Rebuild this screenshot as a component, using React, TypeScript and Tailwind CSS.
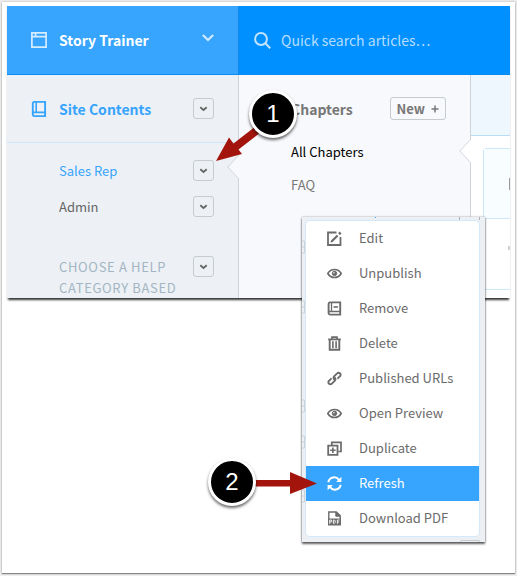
import React from 'react';

const MENU_ITEMS = [
  { label: 'Edit', icon: <EditIcon /> },
  { label: 'Unpublish', icon: <EyeIcon /> },
  { label: 'Remove', icon: <RemoveIcon /> },
  { label: 'Delete', icon: <TrashIcon /> },
  { label: 'Published URLs', icon: <LinkIcon /> },
  { label: 'Open Preview', icon: <EyeIcon /> },
  { label: 'Duplicate', icon: <DuplicateIcon /> },
  { label: 'Refresh', icon: <RefreshIcon />, active: true },
  { label: 'Download PDF', icon: <PdfIcon /> }
];

function EditIcon() {
  return <svg width="15" height="15" viewBox="0 0 15 15" fill="none" stroke="currentColor" aria-hidden="true">
      <path d="M9.5 1.500H1v12.500h12.500V6" strokeWidth="1.800" />
      <path d="M4.800 10.300L10.600 4.400" strokeWidth="2.200" />
      <path d="M12 3.100L13.600 1.500" strokeWidth="2.600" />
      <path d="M3.500 11.600l.6-2.600 2 2z" fill="currentColor" stroke="none" />
    </svg>;
}

function EyeIcon() {
  return <svg width="15" height="15" viewBox="0 0 15 15" fill="none" stroke="currentColor" aria-hidden="true">
      <path d="M.8 7.500C2.400 4.700 4.800 3.500 7.500 3.500S12.600 4.700 14.200 7.500c-1.600 2.800-4 4-6.700 4S2.400 10.300.8 7.500z" strokeWidth="1.600" />
      <circle cx="7.500" cy="7.400" r="2.200" fill="currentColor" strokeWidth="1" />
      <circle cx="6.900" cy="6.700" r=".7" fill="#fff" stroke="none" />
    </svg>;
}

function RemoveIcon() {
  return <svg width="15" height="15" viewBox="0 0 15 15" fill="none" stroke="currentColor" aria-hidden="true">
      <path d="M3 1.400h10.200v12.200H3.200a1.600 1.600 0 0 1-1.600-1.600V2.900A1.500 1.500 0 0 1 3 1.400z" strokeWidth="1.900" />
      <path d="M2 10.500h11" strokeWidth="1.500" />
      <path d="M4.500 2v8.500" strokeWidth="1.300" />
      <path d="M6.500 6h4.400" strokeWidth="1.600" />
    </svg>;
}

function TrashIcon() {
  return <svg width="15" height="15" viewBox="0 0 15 15" fill="none" stroke="currentColor" aria-hidden="true">
      <path d="M1.200 3.400h12.600" strokeWidth="1.800" />
      <path d="M5 3V1.200h5V3" strokeWidth="1.700" />
      <path d="M2.700 4v9.700h9.600V4" strokeWidth="1.900" />
      <path d="M5.900 5.300v6.900M9.100 5.300v6.900" strokeWidth="1.600" />
    </svg>;
}

function LinkIcon() {
  return <svg width="15" height="15" viewBox="0 0 15 15" fill="none" stroke="currentColor" strokeWidth="1.900" strokeLinecap="round" strokeLinejoin="round" aria-hidden="true">
      <path d="M7.200 8.200a2 2 0 0 1-.1-2.900l3-3a2 2 0 0 1 2.900 0 2 2 0 0 1 0 2.900L11 7.200" />
      <path d="M7.800 6.800a2 2 0 0 1 .1 2.900l-3 3a2 2 0 0 1-2.900 0 2 2 0 0 1 0-2.900L4 7.800" />
    </svg>;
}

function DuplicateIcon() {
  return <svg width="15" height="15" viewBox="0 0 15 15" fill="none" stroke="currentColor" aria-hidden="true">
      <path d="M4.800 4V1.300h9.200v9.200H11.300" strokeWidth="1.700" />
      <path d="M1.200 4.700h9.300v9.200H1.200z" strokeWidth="1.800" />
      <path d="M5.900 6.600v5.400M3.200 9.300h5.400" strokeWidth="1.600" />
    </svg>;
}

function RefreshIcon() {
  return <svg width="15" height="15" viewBox="0 0 15 15" fill="none" stroke="currentColor" aria-hidden="true">
      <path d="M1.300 6.300A6 6 0 0 1 12 3.800" strokeWidth="2" />
      <path d="M13.700 8.700A6 6 0 0 1 3 11.200" strokeWidth="2" />
      <path d="M14.400.8v5.300H9.100zM.6 14.200V8.900h5.300z" fill="currentColor" stroke="none" />
    </svg>;
}

function PdfIcon() {
  return <svg width="15" height="15" viewBox="0 0 15 15" fill="none" stroke="currentColor" aria-hidden="true">
      <path d="M1.800 8V1h7.500L13.200 4.500V8" strokeWidth="1.400" />
      <path d="M8.800 1v4.200H13z" fill="currentColor" strokeWidth="1" />
      <path d="M1 7.500h13V14.500H1z" fill="currentColor" stroke="none" />
      <path d="M2.700 12.800V9h1.700v2H2.700M6.400 9h.9l.9.900v1.600l-.9.900h-.9zM10.400 12.800V9h2.100M10.400 11h1.700" stroke="#fff" strokeWidth=".9" />
    </svg>;
}

function WindowIcon() {
  return <svg width="16" height="16" viewBox="0 0 16 16" fill="none" stroke="currentColor" strokeWidth="1.700" aria-hidden="true">
      <path d="M.9.900h14.200v14.200H.9zM.9 4.700h14.200M4.600.900v3.500" />
    </svg>;
}

function BookIcon() {
  return <svg width="16" height="16" viewBox="0 0 16 16" fill="none" stroke="currentColor" strokeWidth="1.900" aria-hidden="true">
      <path d="M3.400.900h10.700v14.200H3.400a1.600 1.600 0 0 1-1.600-1.600V2.500A1.600 1.600 0 0 1 3.400.900z" />
      <path d="M2 11.400h12M5.200 1v10.200" strokeWidth="1.600" />
    </svg>;
}

interface DropButtonProps {
  label: string;
}

const DropButton: React.FC<DropButtonProps> = ({ label }) => {
  return <button type="button" aria-label={label} className="flex h-[21px] w-[21px] shrink-0 items-center justify-center rounded-[3px] border border-[#c6cbcf] text-[#666]">
      <svg width="9" height="9" viewBox="0 0 9 9" fill="none" stroke="currentColor" strokeWidth="1.800" aria-hidden="true">
        <path d="M1.300 3.200l3.200 2.800 3.200-2.800" />
      </svg>
    </button>;
};

interface NotchProps {
  fill: string;
  className: string;
}

const Notch: React.FC<NotchProps> = ({ fill, className }) => {
  return <svg width="12" height="24" viewBox="0 0 12 24" className={`absolute -right-px ${className}`} aria-hidden="true">
      <path d="M12 .5h-.5L.8 12l10.700 11.500h.5z" fill={fill} />
      <path d="M11.500 0v.5L.8 12l10.700 11.500v.5" fill="none" stroke="#d0d6db" />
    </svg>;
};

interface CalloutProps {
  step: number;
  className: string;
}

const Callout: React.FC<CalloutProps> = ({ step, className }) => {
  return <div className={`absolute flex h-12 w-12 items-center justify-center rounded-full border-[3px] border-white bg-black font-['Liberation_Sans',sans-serif] text-2xl text-white shadow-[0_2px_3px_rgba(0,0,0,0.6)] ${className}`}>
      {step}
    </div>;
};

const Sidebar = () => {
  return <aside className="relative w-[232px] shrink-0 border-r border-[#cdd3d8] bg-[#edf1f5]">
      <div className="flex h-[68px] items-center border-b border-[#cce6fa] pr-6 pl-6 text-[#37a4fd]">
        <BookIcon />
        <h2 className="ml-3 flex-1 text-sm font-bold">Site Contents</h2>
        <DropButton label="Site contents options" />
      </div>
      <nav className="pt-[17px] pr-6 pl-[52px] text-[13px] leading-[21px]">
        <div className="flex justify-between">
          <a href="#sales-rep" className="text-[#37a4fd]">Sales Rep</a>
          <DropButton label="Sales Rep options" />
        </div>
        <div className="mt-[15px] flex justify-between">
          <a href="#admin" className="text-[#666]">Admin</a>
          <DropButton label="Admin options" />
        </div>
        <div className="mt-[39px] flex justify-between">
          <h3 className="tracking-wider text-[#a3b5c3] uppercase">Choose a help category based</h3>
          <DropButton label="Category options" />
        </div>
      </nav>
      <Notch fill="#f7f9fc" className="top-20" />
    </aside>;
};

const Chapters = () => {
  return <section className="relative w-[232px] shrink-0 border-r border-[#cdd3d8] bg-[#f7f9fc]">
      <div className="mt-[22px] flex h-[23px] items-center justify-between pr-6 pl-[52px]">
        <h2 className="text-sm font-bold text-[#777]">Chapters</h2>
        <button type="button" className="flex h-[23px] items-center gap-1.5 rounded-[3px] border border-[#c6cbcf] px-1.5 text-[13px] font-bold text-[#777]">
          New
          <svg width="8" height="8" viewBox="0 0 8 8" stroke="currentColor" strokeWidth="1.500" aria-hidden="true">
            <path d="M4 .5v7M.5 4h7" />
          </svg>
        </button>
      </div>
      <nav className="mt-[15px] flex flex-col pl-[52px] text-[13px] leading-[33px]">
        <a href="#all-chapters" className="text-black">All Chapters</a>
        <a href="#faq" className="text-[#777]">FAQ</a>
      </nav>
      <Notch fill="#fff" className="top-16" />
    </section>;
};

const ArticleArea = () => {
  return <main className="flex min-w-0 flex-1 flex-col bg-white">
      <div className="h-[61px] border-b border-[#b9def3] bg-[#eef6fe]" />
      <div className="mt-3 ml-3 rounded-tl border-t border-l border-[#cce6fa]">
        <div className="flex h-[70px] items-center justify-end border-b border-[#cce6fa] bg-[#f8fdff]">
          <span className="h-3 w-px bg-[#999]" />
        </div>
        <div className="flex h-[71px] items-center justify-end border-b border-[#cce6fa] pb-3">
          <span className="h-1 w-0.5 bg-[#ccd3d8]" />
        </div>
      </div>
    </main>;
};

const ContextMenu = () => {
  return <div className="absolute top-[217px] left-[302px] w-[183px] bg-[#eceff3] pt-1 pr-1.5 pb-1.5 pl-1 shadow-[0_2px_2px_rgba(0,0,0,0.6),0_0_2px_rgba(0,0,0,0.35)]">
      <div className="absolute bottom-0 left-[158px] h-0.5 w-5 rounded-t border border-b-0 border-[#c6cbcf]" />
      <svg width="183" height="325" viewBox="0 0 183 325" className="absolute top-0 left-0" fill="none" stroke="#cdd3d8" aria-hidden="true">
        <path d="M0 24h2.500v12H0M0 30h2.500M0 84h2.500v12H0M0 90h2.500M0 183h2.500v12H0M0 189h2.500M0 219h2.500v12H0M0 225h2.500M0 273h2.500v12H0M0 279h2.500" />
        <path d="M157.500 0v3M177.500 0v3" stroke="#aab0b5" />
        <path d="M73 .5h1" stroke="#37a4fd" />
      </svg>
      <ul className="relative rounded-sm bg-white shadow-[0_0_0_1px_#d3e9f9]">
        {MENU_ITEMS.map(item => <li key={item.label}>
            <button type="button" className={`flex h-[35px] w-full items-center gap-[17px] pb-px pl-[21px] text-left text-[13px] ${item.active ? 'bg-[#37a4fd] text-white' : 'text-[#6b6b6b]'}`}>
              {item.icon}
              {item.label}
            </button>
          </li>)}
      </ul>
    </div>;
};

export default function App() {
  return <div className="relative min-h-screen bg-[#eee] px-0.5 pt-0.5 pb-[3px] font-['Noto_Sans_CJK_JP',sans-serif]">
      <div className="min-h-[571px] bg-white px-[5px] pt-1 shadow-[0_0_2px_#aaa,0_1px_1px_#777]">
        <div className="shadow-[0_3px_2px_-1px_rgba(0,0,0,0.8)]">
          <header className="flex h-[69px] border-b border-[#0a8cf5] bg-[#0090ff] text-white">
            <button type="button" className="flex w-[232px] shrink-0 items-center border-r border-[#1287e3] bg-[#37a4fd] pr-6 pl-6 text-left">
              <span className="text-[#d6ecff]"><WindowIcon /></span>
              <span className="ml-3 flex-1 text-sm font-bold">Story Trainer</span>
              <svg width="12" height="8" viewBox="0 0 12 8" className="mb-1" fill="none" stroke="#cfe9ff" strokeWidth="2.200" aria-hidden="true">
                <path d="M.8 1l5.200 5L11.200 1" />
              </svg>
            </button>
            <label className="flex min-w-0 flex-1 items-center pl-[15px]">
              <svg width="17" height="17" viewBox="0 0 17 17" fill="none" stroke="#c2e3ff" strokeWidth="2" role="img" aria-label="Search">
                <circle cx="7" cy="7" r="5.900" />
                <path d="M11.300 11.300l4.900 4.900" />
              </svg>
              <input type="text" placeholder="Quick search articles…" className="ml-2.5 min-w-0 flex-1 text-sm outline-none placeholder:text-[#b5ddff]" />
            </label>
          </header>
          <div className="flex">
            <Sidebar />
            <Chapters />
            <ArticleArea />
          </div>
        </div>
      </div>
      <ContextMenu />
      <svg width="48" height="40" viewBox="0 0 48 40" className="absolute top-[122px] left-[214px]" fill="#a3150c" aria-hidden="true">
        <path d="M2 39L15 15.500l4.500 6L42 4l5 6-22.500 17.500L28 32z" />
      </svg>
      <svg width="64" height="24" viewBox="0 0 64 24" className="absolute top-[471px] left-[253px]" fill="#a3150c" aria-hidden="true">
        <path d="M0 9h37V1l27 11.500L37 23v-7.500H0z" />
      </svg>
      <Callout step={1} className="top-[90px] left-[249px]" />
      <Callout step={2} className="top-[458px] left-[208px]" />
    </div>;
}
